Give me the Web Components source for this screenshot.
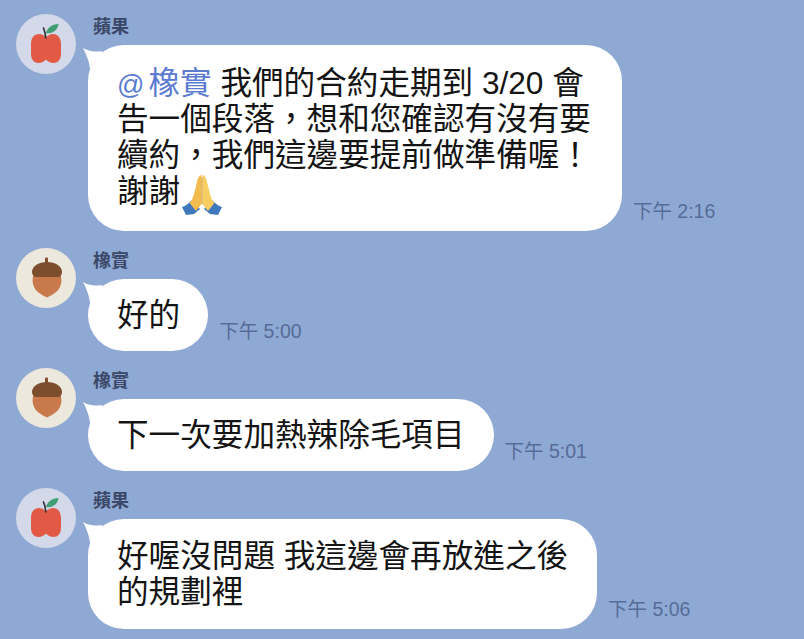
<!DOCTYPE html>
<html lang="zh-Hant">
<head>
<meta charset="utf-8">
<title>chat</title>
<style>
html, body { margin: 0; height: 100%; }
body { background: #8fa9d5; overflow: hidden; }
chat-list { height: 639px; }
</style>
</head>
<body>
<chat-list>
  <chat-message who="apple" name="蘋果" time="下午 2:16" pad="20px 31px 22px 29px">
    <chat-mention>橡實</chat-mention> 我們的合約走期到 3/20 會<br>告一個段落，想和您確認有沒有要<br>續約，我們這邊要提前做準備喔！<br>謝謝<pray-emoji></pray-emoji>
  </chat-message>
  <chat-message who="acorn" name="橡實" time="下午 5:00" pad="18px 28px 18px 29px">好的</chat-message>
  <chat-message who="acorn" name="橡實" time="下午 5:01">下一次要加熱辣除毛項目</chat-message>
  <chat-message who="apple" name="蘋果" time="下午 5:06" pad="19px 29px 19px">好喔沒問題 我這邊會再放進之後<br>的規劃裡</chat-message>
</chat-list>

<script>
const listTemplate = document.createElement("template")
listTemplate.innerHTML = `
<style>
:host{
  display: flex;
  flex-direction: column;
  gap: 17px;
  padding: 14px 0 0 16px;
  box-sizing: border-box;
  font-family: "Liberation Sans", "Noto Sans CJK TC", sans-serif;
}
</style>
<slot></slot>
`
class ChatList extends HTMLElement {
  constructor() {
    super()
    this.attachShadow({ mode: "open" })
    this.shadowRoot.appendChild(listTemplate.content.cloneNode(true))
  }
}
customElements.define("chat-list", ChatList)

const avatars = {
  apple: `
  <svg viewBox="0 0 60 60" width="60" height="60">
    <circle cx="30" cy="30" r="30" fill="#d3d9e9"/>
    <path d="M15 30C15 23.500 18.500 20 23 20C26 20 28 22 30 22.500C32 22 34 20 37 20C41.500 20 45 23.500 45 30V40C45 46 41.500 49 37.500 49C34.500 49 32 47.500 30 45.500C28 47.500 25.500 49 22.500 49C18.500 49 15 46 15 40Z" fill="#e25a45"/>
    <path d="M27.500 14C28.800 17 29.500 20 29.700 24" fill="none" stroke="#37343a" stroke-width="1.700" stroke-linecap="round"/>
    <path d="M30 19C31 14 36 10 42.500 10C42 15.500 36.500 20.500 30 19Z" fill="#3f9e74"/>
  </svg>`,
  acorn: `
  <svg viewBox="0 0 60 60" width="60" height="60">
    <circle cx="30" cy="30" r="30" fill="#ece8de"/>
    <rect x="29" y="9.500" width="3" height="6" rx="1" fill="#7c4e2e"/>
    <path d="M17 28H45C46.500 37 44 44 31 49.500C18 44 15.500 37 17 28Z" fill="#c97a4c"/>
    <path d="M16 24C16 18 23 14 31 14S46 18 46 24C46 27 44 29 42 29H20C18 29 16 27 16 24Z" fill="#7c4e2e"/>
  </svg>`
}

const messageTemplate = document.createElement("template")
messageTemplate.innerHTML = `
<style>
:host{
  display: flex;
  align-items: flex-start;
  gap: 12px;
}
.avatar{
  flex: none;
  width: 60px;
  height: 60px;
}
.avatar svg{
  display: block;
}
.name{
  height: 31px;
  line-height: 26px;
  padding-left: 5px;
  font-size: 18px;
  font-weight: 700;
  color: #3b4868;
}
.line{
  display: flex;
  align-items: flex-end;
  gap: 11px;
}
.bubble{
  position: relative;
  background: #fff;
  border-radius: 36px;
  color: #141414;
  font-size: 31.6px;
  line-height: 36px;
  white-space: nowrap;
}
.tail{
  position: absolute;
  left: -6px;
  top: 2px;
}
.time{
  font-size: 19.5px;
  line-height: 24px;
  padding-bottom: 8px;
  color: #566c96;
  white-space: nowrap;
}
</style>
<div class="avatar"></div>
<div class="body">
  <div class="name"></div>
  <div class="line">
    <div class="bubble">
      <svg class="tail" width="26" height="24" viewBox="0 0 26 24"><path d="M1 1c5 3 11 4.500 19 3l2 18H8C7 13 4 7 1 1Z" fill="#fff"/></svg>
      <slot></slot>
    </div>
    <div class="time"></div>
  </div>
</div>
`
class ChatMessage extends HTMLElement {
  constructor() {
    super()
    this.attachShadow({ mode: "open" })
    this.shadowRoot.appendChild(messageTemplate.content.cloneNode(true))
  }
  connectedCallback() {
    const root = this.shadowRoot
    root.querySelector(".avatar").innerHTML = avatars[this.getAttribute("who")]
    root.querySelector(".name").textContent = this.getAttribute("name")
    root.querySelector(".time").textContent = this.getAttribute("time")
    root.querySelector(".bubble").style.padding = this.getAttribute("pad") || "18px 29px"
  }
}
customElements.define("chat-message", ChatMessage)

const mentionTemplate = document.createElement("template")
mentionTemplate.innerHTML = `
<style>
:host{
  display: inline;
  color: #5a7bd0;
}
.at{
  font-size: 27px;
  line-height: 1;
  margin-right: 4px;
}
</style>
<span class="at">@</span><slot></slot>
`
class ChatMention extends HTMLElement {
  constructor() {
    super()
    this.attachShadow({ mode: "open" })
    this.shadowRoot.appendChild(mentionTemplate.content.cloneNode(true))
  }
}
customElements.define("chat-mention", ChatMention)

const prayTemplate = document.createElement("template")
prayTemplate.innerHTML = `
<style>
:host{
  display: inline-block;
  width: 42px;
  height: 30px;
  vertical-align: -6px;
  margin-left: 1px;
}
svg{
  display: block;
  margin-top: -4px;
}
</style>
<svg viewBox="0 0 42 42" width="42" height="42">
  <path d="M1 33C5 32 8 29 11 26L19 35L13 40L5 41Z" fill="#3f78bd"/>
  <path d="M41 33C37 32 34 29 31 26L23 35L29 40L37 41Z" fill="#3f78bd"/>
  <path d="M20.500 1C18 1 16.500 5 15.500 10L13 20C12 24 10.500 27 8.500 29L15 37L20.500 30Z" fill="#f2bb4e"/>
  <path d="M21.500 1C24 1 25.500 5 26.500 10L29 20C30 24 31.500 27 33.500 29L27 37L21.500 30Z" fill="#f8cd62"/>
  <path d="M21 3V30" stroke="#d2953a" stroke-width="1"/>
</svg>
`
class PrayEmoji extends HTMLElement {
  constructor() {
    super()
    this.attachShadow({ mode: "open" })
    this.shadowRoot.appendChild(prayTemplate.content.cloneNode(true))
  }
}
customElements.define("pray-emoji", PrayEmoji)
</script>
</body>
</html>
